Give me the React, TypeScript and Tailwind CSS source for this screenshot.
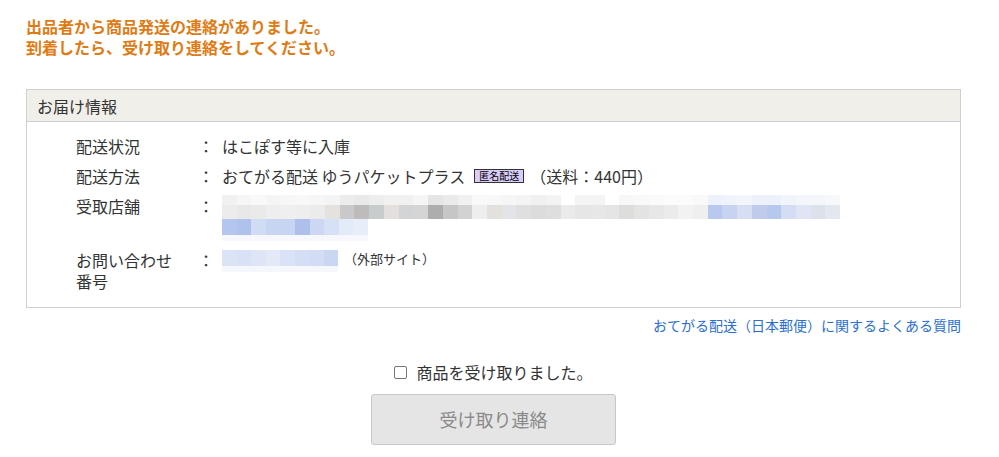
import React from "react";

const font = { fontFamily: '"Noto Sans CJK JP", "Noto Sans", sans-serif' };

const line1Top = [
  "#f1f1f1","#f6f6f6","#f9f9f9","#f5f5f5","#f7f7f7","#f8f8f8","#f6f6f6","#f4f4f4","#ececec","#e9e9e9","#ededed","#f1f1f1","#f0f0f0","#f5f5f5","#e5e5e5","#eaeaea","#f0f0f0","#f9f9f9","#f8f8f8","#f6f6f6","#f4f4f4","#f0f0f0","#f3f3f3","#ffffff","#f4f4f4","#f4f4f4","#ffffff","#f7f7f7","#f9f9f9","#fafafa","#fcfcfc","#fbfbfb","#f9f9f9","#edf1fb","#f0f3fb","#f2f5fc","#eef1fb","#edf1fb","#f2f4fb","#f4f6fc","#f4f6fa","#f7f8fb",
];
const line1Bottom = [
  "#ececec","#e8e8e8","#eaeaea","#eeeeee","#efefef","#eeeeee","#ebebeb","#e4e1de","#c9c9c9","#bdbcbb","#c9cccd","#e2dfdc","#d3d4d5","#d5d5d5","#adadad","#c6c6c6","#d3d2d0","#eeeeee","#e4e0dd","#e3e4e7","#dfdfdf","#dcdcdc","#dedede","#ebebeb","#e6e6e6","#e7e7e7","#e5e5e5","#dddddb","#e3e3e3","#e7e7e7","#ebebeb","#f2f2f2","#efefef","#b8c8ee","#c7d3f0","#d5def3","#c0cbec","#b6c8ee","#d4ddf3","#dfe5f5","#dde2ea","#e3e7ef",
];
const line2 = ["#b4c6ee","#afc2ec","#d0dcf4","#c6d5f2","#c8d5f2","#aebfeb","#ccd8f3","#d7e1f6","#e3eaf8","#e8eef9"];
const contact = ["#dbe3f5","#d8e1f5","#dde5f6","#e3e9f7","#d9e2f6","#d4def5","#d2ddf5","#c9d7f3"];

function Strip({ colors, className }: { colors: string[]; className: string }) {
  return (
    <div className={"flex " + className}>
      {colors.map((c, i) => (
        <div key={i} className="flex-1" style={{ backgroundColor: c }} />
      ))}
    </div>
  );
}

function Row({ label, children }: { label: React.ReactNode; children: React.ReactNode }) {
  return (
    <div className="flex py-[4.5px] leading-[21px]">
      <div className="w-[122px] shrink-0">{label}</div>
      <div className="w-[24px] shrink-0">：</div>
      <div className="flex-1">{children}</div>
    </div>
  );
}

export default function App() {
  return (
    <div className="min-h-[457px] bg-white text-[#333333]" style={font}>
      <div className="ml-[26px] w-[935px] pt-[15.5px]">
        <div className="text-[16px] font-bold leading-[21px] text-[#e07b14]">
          <p>出品者から商品発送の連絡がありました。</p>
          <p>到着したら、受け取り連絡をしてください。</p>
        </div>

        <div className="mt-[31.5px] border border-[#cfcfcf]">
          <div className="h-[32px] border-b border-[#cfcfcf] bg-[#f0efe9] pl-[10px] text-[16px] leading-[32px] text-[#333]">
            お届け情報
          </div>
          <div className="pb-[11px] pl-[49px] pt-[9px] text-[16px]">
            <Row label="配送状況">はこぽす等に入庫</Row>
            <Row label="配送方法">
              <span className="flex items-center">
                <span>おてがる配送 ゆうパケットプラス</span>
                <span className="ml-[9px] inline-block border border-[#333] bg-[#d9cdf8] px-[4px] text-[10px] leading-[12px] text-black">
                  匿名配送
                </span>
                <span className="ml-[6px]">（送料：440円）</span>
              </span>
            </Row>
            <Row label="受取店舗">
              <div className="h-[46px]">
                <Strip colors={line1Top} className="-mt-[1px] h-[10px] w-[618px]" />
                <Strip colors={line1Bottom} className="h-[14px] w-[618px]" />
                <Strip colors={line2} className="h-[16px] w-[146px]" />
                <div className="h-[6px] w-[146px] bg-[#f6f8fd]" />
              </div>
            </Row>
            <Row
              label={
                <>
                  お問い合わせ
                  <br />
                  番号
                </>
              }
            >
              <div className="flex items-start">
                <div>
                  <Strip colors={contact} className="mt-[0.5px] h-[16px] w-[116px]" />
                  <div className="h-[6px] w-[116px] bg-[#f5f7fd]" />
                </div>
                <span className="ml-[6px] text-[13px] leading-[17px]">（外部サイト）</span>
              </div>
            </Row>
          </div>
        </div>

        <div className="mt-[7px] text-right text-[14px] leading-[21px]">
          <a className="text-[#2b6fd0]">おてがる配送（日本郵便）に関するよくある質問</a>
        </div>

        <div className="mt-[26px] flex flex-col items-center">
          <label className="flex items-center text-[16px] leading-[21px]">
            <span className="mr-[9px] inline-block h-[13px] w-[13px] rounded-[2px] border border-[#767676] bg-white" />
            商品を受け取りました。
          </label>
          <button className="mt-[10.5px] h-[51px] w-[245px] rounded-[3px] border border-[#c8c8c8] bg-[#e5e5e5] text-[18px] text-[#8a8a8a]">
            受け取り連絡
          </button>
        </div>
      </div>
    </div>
  );
}
